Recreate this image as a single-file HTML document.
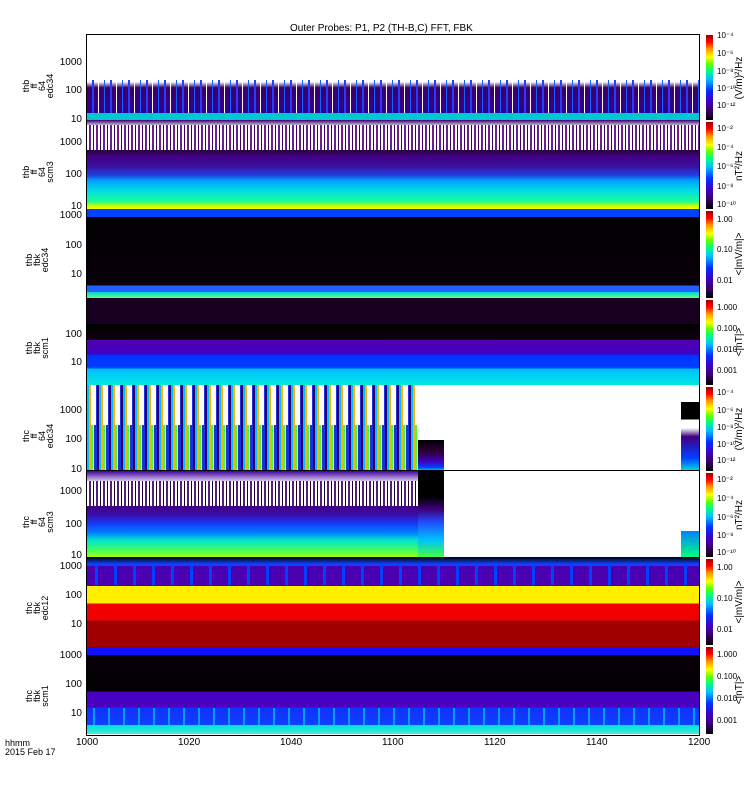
<!DOCTYPE html>
<html><head><style>
body{margin:0;width:750px;height:800px;background:#fff;position:relative;overflow:hidden;font-family:"Liberation Sans",sans-serif;font-size:10px;color:#000}
.a{position:absolute}
.p{position:absolute;left:87px;width:612px;overflow:hidden}
.t{position:absolute;font-size:10px;text-align:right;width:40px;line-height:10px}
.lab{position:absolute;transform:rotate(-90deg);font-size:9px;line-height:8px;text-align:center;white-space:nowrap}
.cb{position:absolute;left:706px;width:7px;background:linear-gradient(to top,#000 0%,#3a0070 12%,#4000c0 22%,#0030ff 35%,#00c0ff 48%,#00ff80 58%,#60ff00 66%,#ffff00 74%,#ff9000 84%,#ff0000 92%,#a00000 100%)}
.cl{position:absolute;left:717px;font-size:8px}
.un{position:absolute;transform:rotate(-90deg);font-size:10px;white-space:nowrap;width:70px;text-align:center;left:705px;height:12px;line-height:12px}
.st{position:absolute;top:0;bottom:0}
</style></head><body>
<div class="a" style="left:290px;top:23px;font-size:10px">Outer Probes: P1, P2 (TH-B,C) FFT, FBK</div>

<!-- P1 -->
<div class="p" style="top:35px;height:85px;background:linear-gradient(#fff 0%,#fff 55%,#3a0060 62%,#3a0080 80%,#2a0090 92%,#00c8d0 92%,#00c8d0 100%)">
<div class="st" style="left:0;right:0;top:45px;height:33px;background:repeating-linear-gradient(90deg,transparent 0 5px,#2040ff 5px 7px,transparent 7px 11px,#fff 11px 12px,transparent 12px 17px,#1060ff 17px 18px)"></div>
</div>
<!-- P2 -->
<div class="p" style="top:120px;height:89px;background:linear-gradient(#3a0070 0%,#fff 8%,#806090 25%,#200020 32%,#400080 40%,#3a10a0 52%,#2040e0 62%,#00a0ff 68%,#00e0e0 80%,#20ff90 92%,#c0ff00 96%,#ffff00 100%)">
<div class="st" style="left:0;right:0;top:5px;height:25px;background:repeating-linear-gradient(90deg,#fff 0 2px,#6a2090 2px 4px,#fff 4px 6px,#400060 6px 7px)"></div>
</div>
<!-- P3 -->
<div class="p" style="top:209px;height:89px;background:linear-gradient(#0040ff 0%,#0040ff 9%,#000 9%,#0a000a 86%,#2060ff 86%,#2060ff 93%,#00d0e0 93%,#60ff80 100%)"></div>
<!-- P4 -->
<div class="p" style="top:298px;height:87px;background:linear-gradient(#1a0020 0%,#1a0020 30%,#000 30%,#100010 48%,#5000b0 48%,#4000c0 65%,#0030ff 65%,#0040ff 80%,#00c0ff 82%,#00e8e0 100%)"></div>
<!-- P5 -->
<div class="p" style="top:385px;height:86px;background:#fff">
<div class="st" style="left:0;width:331px;background:repeating-linear-gradient(90deg,#00c0ff 0 2px,#ffb000 2px 4px,#40ff40 4px 6px,#fff 6px 7px,#2030e0 7px 10px,#30006a 10px 12px)"></div>
<div class="st" style="left:0;width:331px;top:0;height:40px;background:repeating-linear-gradient(90deg,transparent 0 4px,#fff 4px 9px,transparent 9px 12px)"></div>
<div class="st" style="left:331px;width:26px;top:55px;background:linear-gradient(#000,#300040 40%,#4000c0 70%,#0040ff 88%,#00e0e0 100%)"></div>
<div class="st" style="left:594px;width:18px;background:linear-gradient(#fff 0 20%,#000 20% 40%,#fff 40% 50%,#400080 60%,#0040ff 85%,#00e0e0)"></div>
</div>
<!-- P6 -->
<div class="p" style="top:471px;height:86px;background:#fff">
<div class="st" style="left:0;width:331px;background:linear-gradient(#4000a0 0%,#fff 15%,#606080 30%,#400080 40%,#3a10b0 52%,#1040ff 62%,#0080ff 72%,#00e0d0 80%,#40ff60 92%,#a0ff00 100%)"></div>
<div class="st" style="left:0;width:331px;top:10px;height:25px;background:repeating-linear-gradient(90deg,#fff 0 2px,#50207a 2px 4px,#fff 4px 6px,#200030 6px 7px)"></div>
<div class="st" style="left:331px;width:26px;background:linear-gradient(#000 0 30%,#400080 45%,#2050ff 60%,#00c0ff 80%,#40ff40)"></div>
<div class="st" style="left:594px;width:18px;top:60px;background:linear-gradient(#0080ff,#00ff80)"></div>
</div>
<!-- P7 -->
<div class="p" style="top:557px;height:88px;background:linear-gradient(#000 0%,#1040ff 8%,#1040ff 10%,#4a00b0 10%,#4a00b0 33%,#ffee00 33%,#ffee00 53%,#f00000 53%,#f00000 72%,#a00000 72%,#a00000 100%)">
<div class="st" style="left:0;right:0;top:8px;height:20px;background:repeating-linear-gradient(90deg,transparent 0 8px,#0040ff 8px 11px,transparent 11px 19px)"></div>
</div>
<!-- P8 -->
<div class="p" style="top:645px;height:89px;background:linear-gradient(#a00000 0%,#a00000 2%,#1010ff 2%,#1010ff 11%,#0a000a 11%,#000 52%,#4a00c0 52%,#4a00c0 70%,#1030ff 70%,#1040ff 90%,#00e0e0 90%,#40f0d0 100%)">
<div class="st" style="left:0;right:0;top:63px;height:17px;background:repeating-linear-gradient(90deg,transparent 0 6px,#00a0ff 6px 8px,transparent 8px 15px)"></div>
</div>
<div class="a" style="left:86px;top:34px;width:612px;height:700px;border:1px solid #000"></div>
<div class="a" style="left:86px;top:470px;width:614px;height:1px;background:#000"></div>

<!-- y tick labels -->
<div class="t" style="left:42px;top:58px">1000</div><div class="t" style="left:42px;top:86px">100</div><div class="t" style="left:42px;top:115px">10</div>
<div class="t" style="left:42px;top:138px">1000</div><div class="t" style="left:42px;top:170px">100</div><div class="t" style="left:42px;top:202px">10</div>
<div class="t" style="left:42px;top:211px">1000</div><div class="t" style="left:42px;top:241px">100</div><div class="t" style="left:42px;top:270px">10</div>
<div class="t" style="left:42px;top:330px">100</div><div class="t" style="left:42px;top:358px">10</div>
<div class="t" style="left:42px;top:406px">1000</div><div class="t" style="left:42px;top:435px">100</div><div class="t" style="left:42px;top:465px">10</div>
<div class="t" style="left:42px;top:487px">1000</div><div class="t" style="left:42px;top:520px">100</div><div class="t" style="left:42px;top:551px">10</div>
<div class="t" style="left:42px;top:562px">1000</div><div class="t" style="left:42px;top:591px">100</div><div class="t" style="left:42px;top:620px">10</div>
<div class="t" style="left:42px;top:651px">1000</div><div class="t" style="left:42px;top:680px">100</div><div class="t" style="left:42px;top:709px">10</div>

<!-- panel labels -->
<div class="lab" style="left:18px;top:70px;width:40px">thb<br>ff<br>64<br>edc34</div>
<div class="lab" style="left:18px;top:156px;width:40px">thb<br>ff<br>64<br>scm3</div>
<div class="lab" style="left:22px;top:248px;width:30px">thb<br>fbk<br>edc34</div>
<div class="lab" style="left:22px;top:336px;width:30px">thb<br>fbk<br>scm1</div>
<div class="lab" style="left:18px;top:420px;width:40px">thc<br>ff<br>64<br>edc34</div>
<div class="lab" style="left:18px;top:506px;width:40px">thc<br>ff<br>64<br>scm3</div>
<div class="lab" style="left:22px;top:596px;width:30px">thc<br>fbk<br>edc12</div>
<div class="lab" style="left:22px;top:684px;width:30px">thc<br>fbk<br>scm1</div>

<!-- x axis -->
<div class="a" style="left:76px;top:737px">1000</div>
<div class="a" style="left:178px;top:737px">1020</div>
<div class="a" style="left:280px;top:737px">1040</div>
<div class="a" style="left:382px;top:737px">1100</div>
<div class="a" style="left:484px;top:737px">1120</div>
<div class="a" style="left:586px;top:737px">1140</div>
<div class="a" style="left:688px;top:737px">1200</div>
<div class="a" style="left:5px;top:739px;font-size:9px;line-height:9px">hhmm<br>2015 Feb 17</div>

<!-- colorbars -->
<div class="cb" style="top:35px;height:85px"></div>
<div class="cb" style="top:122px;height:87px"></div>
<div class="cb" style="top:211px;height:87px"></div>
<div class="cb" style="top:300px;height:85px"></div>
<div class="cb" style="top:387px;height:84px"></div>
<div class="cb" style="top:473px;height:84px"></div>
<div class="cb" style="top:559px;height:86px"></div>
<div class="cb" style="top:647px;height:87px"></div>

<div class="cl" style="top:31px">10⁻⁴</div><div class="cl" style="top:49px">10⁻⁶</div><div class="cl" style="top:67px">10⁻⁸</div><div class="cl" style="top:84px">10⁻¹⁰</div><div class="cl" style="top:101px">10⁻¹²</div>
<div class="cl" style="top:124px">10⁻²</div><div class="cl" style="top:143px">10⁻⁴</div><div class="cl" style="top:162px">10⁻⁶</div><div class="cl" style="top:182px">10⁻⁸</div><div class="cl" style="top:200px">10⁻¹⁰</div>
<div class="cl" style="top:215px">1.00</div><div class="cl" style="top:245px">0.10</div><div class="cl" style="top:276px">0.01</div>
<div class="cl" style="top:303px">1.000</div><div class="cl" style="top:324px">0.100</div><div class="cl" style="top:345px">0.010</div><div class="cl" style="top:366px">0.001</div>
<div class="cl" style="top:388px">10⁻⁴</div><div class="cl" style="top:406px">10⁻⁶</div><div class="cl" style="top:423px">10⁻⁸</div><div class="cl" style="top:440px">10⁻¹⁰</div><div class="cl" style="top:456px">10⁻¹²</div>
<div class="cl" style="top:475px">10⁻²</div><div class="cl" style="top:494px">10⁻⁴</div><div class="cl" style="top:513px">10⁻⁶</div><div class="cl" style="top:531px">10⁻⁸</div><div class="cl" style="top:548px">10⁻¹⁰</div>
<div class="cl" style="top:563px">1.00</div><div class="cl" style="top:594px">0.10</div><div class="cl" style="top:625px">0.01</div>
<div class="cl" style="top:650px">1.000</div><div class="cl" style="top:672px">0.100</div><div class="cl" style="top:694px">0.010</div><div class="cl" style="top:716px">0.001</div>

<div class="un" style="top:72px">(V/m)²/Hz</div>
<div class="un" style="top:160px">nT²/Hz</div>
<div class="un" style="top:248px">&lt;|mV/m|&gt;</div>
<div class="un" style="top:336px">&lt;|nT|&gt;</div>
<div class="un" style="top:423px">(V/m)²/Hz</div>
<div class="un" style="top:509px">nT²/Hz</div>
<div class="un" style="top:596px">&lt;|mV/m|&gt;</div>
<div class="un" style="top:684px">&lt;|nT|&gt;</div>
</body></html>
